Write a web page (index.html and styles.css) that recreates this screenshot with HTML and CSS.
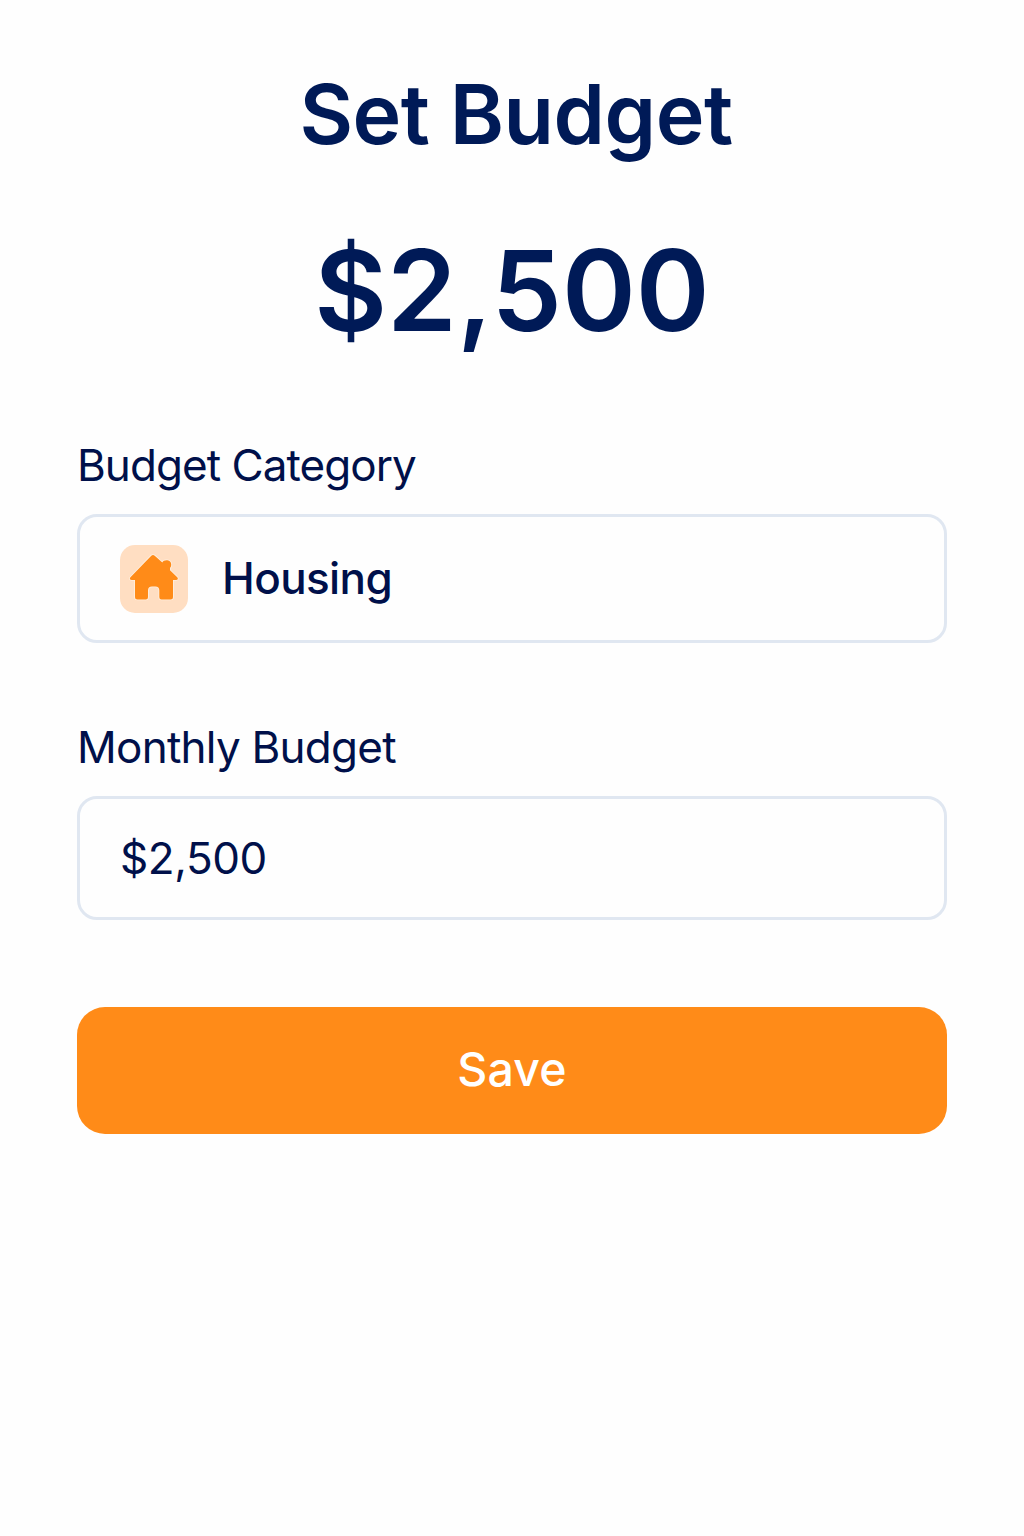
FILE: index.html
```html
<!DOCTYPE html>
<html lang="en">
<head>
<meta charset="utf-8">
<title>Set Budget</title>
<link rel="stylesheet" href="styles.css">
</head>
<body>
<main class="screen">
  <h1 class="title">Set Budget</h1>
  <p class="amount">$2,500</p>
  <form class="form">
    <div class="label">Budget Category</div>
    <div class="field category">
      <span class="badge">
        <svg viewBox="0 0 68 68" width="68" height="68" aria-hidden="true">
          <path d="M31.300 10.700q1.700-1.400 3.400 0L42.300 17.600C43.500 14.400 51.200 14.200 51.200 19.600c0 1.800-.5 2.700-1.200 3.500v2.200L57 32c1.500 1.500 1 3-1 3H53v17q0 2.500-2.500 2.500H41.500q-2.200 0-2.200-2.200V45.500q0-4-4-4H32q-4 0-4 4V52.300q0 2.200-2.200 2.200H17.500q-2.500 0-2.500-2.500V35H12c-2.300 0-2.800-1.500-1.300-3z"/>
        </svg>
      </span>
      <span class="category-name">Housing</span>
    </div>
    <label class="label label-monthly" for="monthly">Monthly Budget</label>
    <input class="field monthly" id="monthly" type="text" value="$2,500">
    <button class="save" type="button">Save</button>
  </form>
</main>
</body>
</html>
```
FILE: styles.css
```css
* { box-sizing: border-box; }
body {
  margin: 0;
  background: #fefefe;
  color: #00104a;
  font-family: Inter, "Liberation Sans", sans-serif;
}
.screen {
  min-height: 1536px;
  padding: 64px 77px 0;
}
.title {
  margin: 0;
  padding-left: 8px;
  text-align: center;
  font-size: 82.5px;
  line-height: 100px;
  font-weight: 600;
  letter-spacing: -0.5px;
  color: #001a57;
}
.amount {
  margin: 56px 0 0;
  text-align: center;
  font-size: 112px;
  line-height: 140px;
  font-weight: 590;
  color: #001a57;
}
.form {
  display: flex;
  flex-direction: column;
  margin-top: 75px;
}
.label {
  font-size: 44px;
  line-height: 60px;
  letter-spacing: -0.95px;
}
.field {
  width: 100%;
  border: 3px solid #e0e7f1;
  border-radius: 20px;
  background: #fefefe;
  padding: 0 40px;
}
.category {
  display: flex;
  align-items: center;
  gap: 34px;
  height: 129px;
  margin-top: 19px;
}
.badge {
  width: 68px;
  height: 68px;
  border-radius: 15px;
  background: #ffdec2;
}
.badge svg {
  display: block;
  fill: #ff8b18;
  stroke: #fff0e0;
  stroke-width: 1.6;
  paint-order: stroke;
}
.category-name {
  font-size: 44px;
  line-height: 54px;
  padding-bottom: 1px;
  font-weight: 550;
  letter-spacing: -0.6px;
}
.label-monthly { margin-top: 74px; letter-spacing: -0.75px; }
.monthly {
  height: 124px;
  margin-top: 19px;
  font: 400 44px Inter, "Liberation Sans", sans-serif;
  letter-spacing: -0.4px;
  color: inherit;
}
.save {
  height: 127px;
  margin-top: 87px;
  padding: 0 0 4px;
  border: 0;
  border-radius: 28px;
  background: #ff8b18;
  color: #fff;
  font: 450 46.5px Inter, "Liberation Sans", sans-serif;
  letter-spacing: 0.2px;
}
```
